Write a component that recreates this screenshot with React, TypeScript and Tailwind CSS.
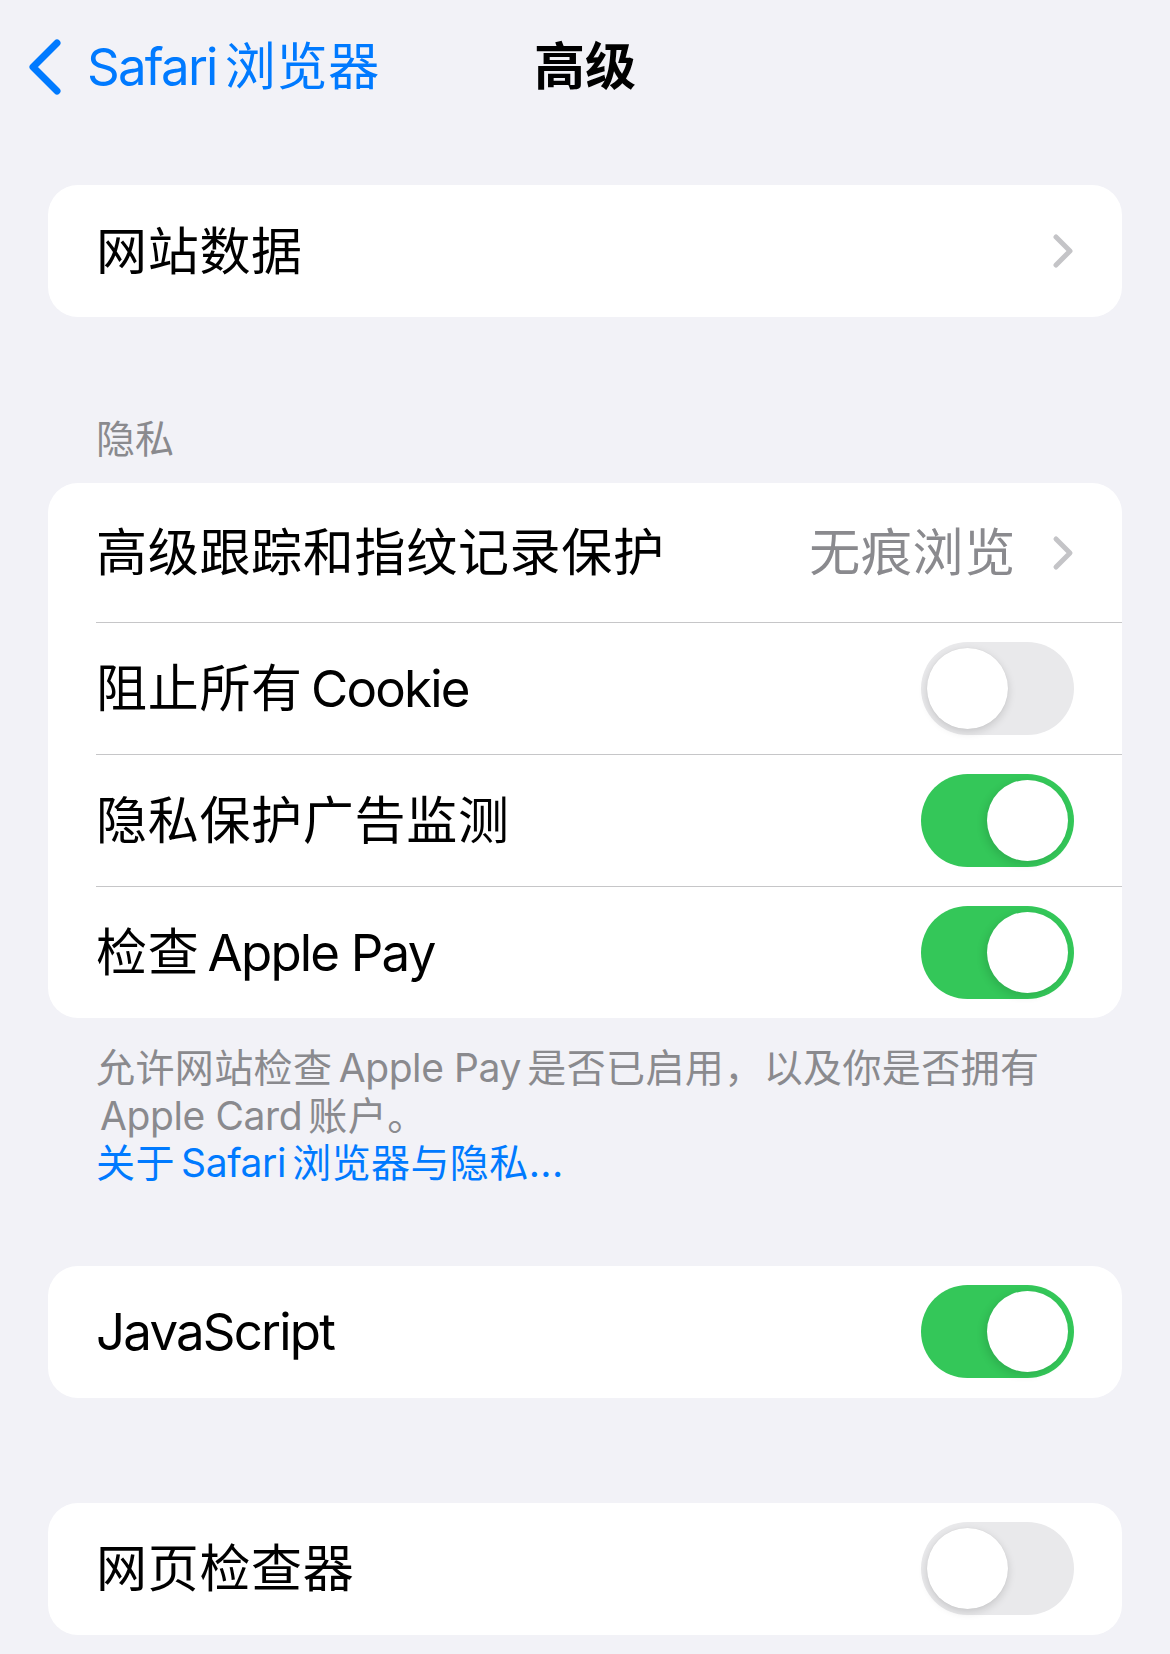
import React from "react";

const FONT = { fontFamily: "Inter, 'Noto Sans CJK SC', sans-serif" };

function L({
  children,
  l = false,
  r = false,
  small = false,
}: {
  children: React.ReactNode;
  l?: boolean;
  r?: boolean;
  small?: boolean;
}) {
  return (
    <span
      className={[
        small ? "tracking-[-0.4px]" : "tracking-[-1.8px]",
        l ? "ml-[0.16em]" : "",
        r ? "mr-[0.16em]" : "",
      ].join(" ")}
    >
      {children}
    </span>
  );
}

function Chevron() {
  return (
    <svg width="22" height="36" viewBox="0 0 22 36" className="shrink-0">
      <polyline
        points="4,4 18,18 4,32"
        fill="none"
        stroke="#c4c4c7"
        strokeWidth="5"
        strokeLinecap="round"
        strokeLinejoin="round"
      />
    </svg>
  );
}

function Toggle({ on }: { on: boolean }) {
  return on ? (
    <div className="relative h-[93px] w-[153px] shrink-0 rounded-full bg-[#34c759]">
      <div className="absolute right-[6px] top-[6px] h-[81px] w-[81px] rounded-full bg-white shadow-[-3px_3px_8px_rgba(0,0,0,0.12)]" />
    </div>
  ) : (
    <div className="relative h-[93px] w-[153px] shrink-0 rounded-full bg-[#e9e9eb]">
      <div className="absolute left-[6px] top-[6px] h-[81px] w-[81px] rounded-full bg-white shadow-[0_3px_8px_rgba(0,0,0,0.15),0_0_1px_rgba(0,0,0,0.1)]" />
    </div>
  );
}

function Row({
  children,
  right,
  h = "h-[132px]",
  sep = false,
}: {
  children: React.ReactNode;
  right?: React.ReactNode;
  h?: string;
  sep?: boolean;
}) {
  return (
    <div className="relative">
      {sep && <div className="absolute left-[48px] right-0 top-0 h-px bg-[#c6c6c8]" />}
      <div className={`flex ${h} items-center justify-between pl-[48px] pr-[48px]`}>
        <div className="text-[51px] leading-none tracking-[0.7px] text-black">{children}</div>
        {right}
      </div>
    </div>
  );
}

export default function App() {
  return (
    <div className="min-h-[1654px] w-[1170px] bg-[#f2f2f7]" style={FONT}>
      {/* Nav */}
      <div className="grid h-[132px] grid-cols-[1fr_auto_1fr] items-center">
        <div className="flex items-center pl-[28px]">
          <svg width="34" height="56" viewBox="0 0 34 56" className="mt-[2px]">
            <polyline
              points="29,4 5,28 29,52"
              fill="none"
              stroke="#007aff"
              strokeWidth="7"
              strokeLinecap="round"
              strokeLinejoin="round"
            />
          </svg>
          <span className="ml-[25px] text-[51px] leading-none tracking-[0.7px] text-[#007aff]">
            <L r>Safari</L>浏览器
          </span>
        </div>
        <div className="text-[51px] font-semibold leading-none text-black">高级</div>
        <div />
      </div>

      <div className="px-[48px]">
        {/* Card 1 */}
        <div className="mt-[53px] overflow-hidden rounded-[30px] bg-white">
          <Row right={<Chevron />}>网站数据</Row>
        </div>

        {/* Section header */}
        <div className="mt-[98px] pl-[48px] text-[39px] leading-[47px] text-[#8a8a8e]">隐私</div>

        {/* Card 2 */}
        <div className="mt-[21px] overflow-hidden rounded-[30px] bg-white">
          <Row
            h="h-[139px]"
            right={
              <div className="flex items-center">
                <span className="text-[51px] leading-none tracking-[0.7px] text-[#8a8a8e]">无痕浏览</span>
                <div className="ml-[36px]">
                  <Chevron />
                </div>
              </div>
            }
          >
            高级跟踪和指纹记录保护
          </Row>
          <Row sep right={<Toggle on={false} />}>
            阻止所有<L l>Cookie</L>
          </Row>
          <Row sep right={<Toggle on />}>
            隐私保护广告监测
          </Row>
          <Row sep right={<Toggle on />}>
            检查<L l>Apple Pay</L>
          </Row>
        </div>

        {/* Footer */}
        <div className="mt-[26px] pl-[48px] text-[39px] leading-[47.5px] tracking-[0.4px] text-[#8a8a8e]">
          <div>
            允许网站检查<L small l r>Apple Pay</L>是否已启用，以及你是否拥有
          </div>
          <div className="pl-[4px]">
            <L small r>Apple Card</L>账户。
          </div>
          <div className="text-[#007aff]">
            关于<L small l r>Safari</L>浏览器与隐私...
          </div>
        </div>

        {/* Card 3 */}
        <div className="mt-[79px] overflow-hidden rounded-[30px] bg-white">
          <Row right={<Toggle on />}>
            <L>JavaScript</L>
          </Row>
        </div>

        {/* Card 4 */}
        <div className="mt-[105px] overflow-hidden rounded-[30px] bg-white">
          <Row right={<Toggle on={false} />}>网页检查器</Row>
        </div>
      </div>
    </div>
  );
}
